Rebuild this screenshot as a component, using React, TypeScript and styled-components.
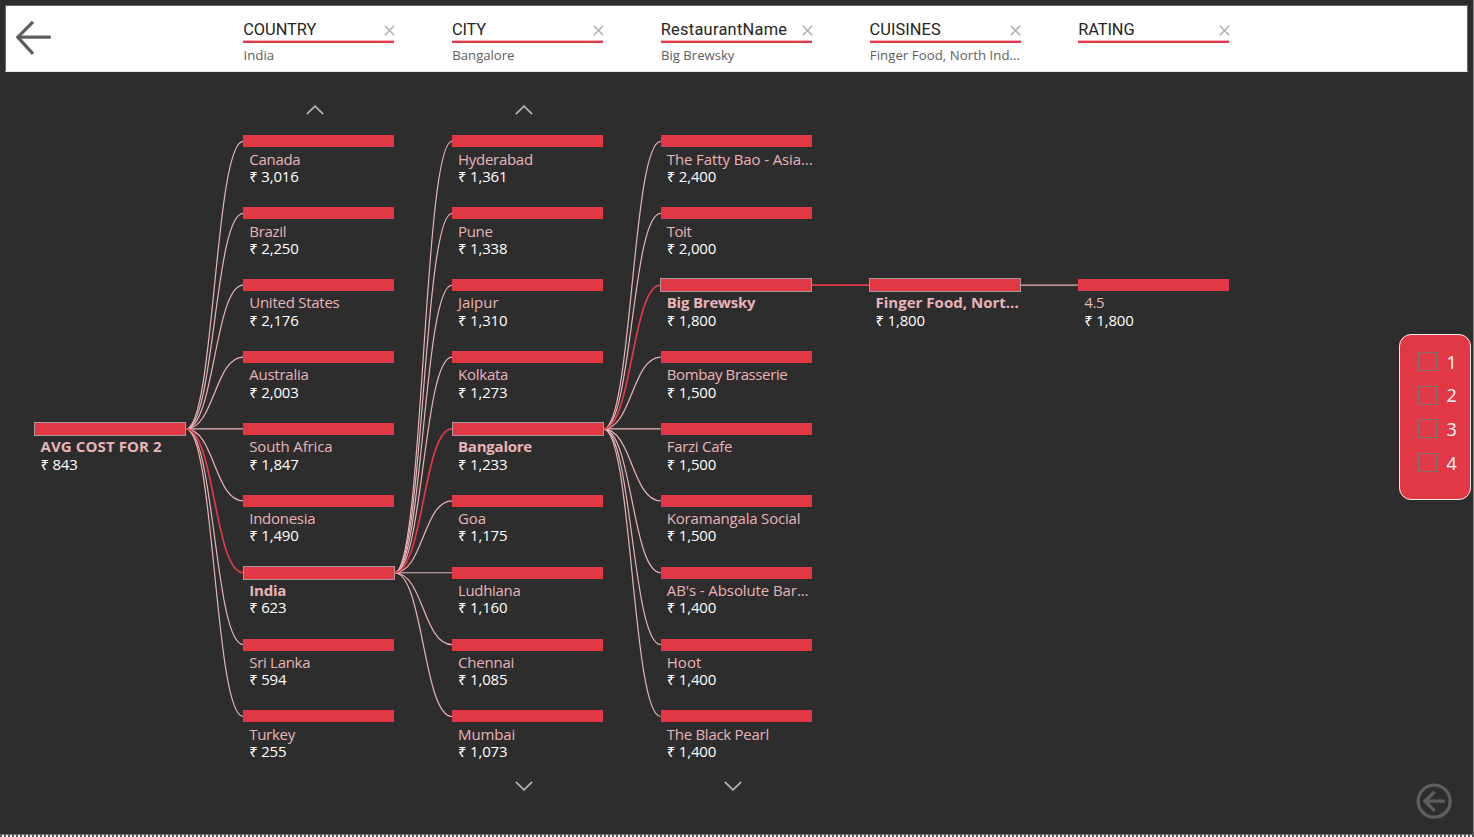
import React, { useLayoutEffect, useRef, useState } from "react";
import styled, { createGlobalStyle, css } from "styled-components";

const RED = "#e23845";
const PINK = "#e9b4b7";
const MUTED = "#b3b0ad";

const GlobalStyle = createGlobalStyle`
  * { box-sizing: border-box; }
  html, body { margin: 0; padding: 0; background: #2d2d2d; }
  body { overflow: hidden; }
`;

const Page = styled.main`
  position: relative;
  width: 1474px;
  height: 837px;
  display: flex;
  flex-direction: column;
  background: #2d2d2d;
  border-right: 1px solid #8a8a8a;
  font-family: "Open Sans", "Noto Sans", sans-serif;
`;

const Header = styled.header`
  flex: none;
  display: flex;
  align-items: flex-start;
  width: 1463px;
  height: 67px;
  margin: 5px 0 0 5px;
  background: #fff;
  border: 1px solid #666;
  border-bottom-color: #e6e6e6;
`;

const BackButton = styled.button`
  flex: none;
  width: 237.25px;
  height: 65px;
  padding: 0;
  border: 0;
  background: none;
  text-align: left;
  svg { display: block; }
`;

const Levels = styled.div`
  display: flex;
  gap: 57.75px;
`;

const Level = styled.section`
  width: 151px;
  padding-top: 12px;
`;

const LevelTitle = styled.div`
  display: flex;
  align-items: center;
  justify-content: space-between;
  height: 25px;
  border-bottom: 2px solid ${RED};
  box-shadow: inset 0 -1px #f3b5b9;
  color: #252423;
  font-family: Roboto, sans-serif;
  font-size: 16.4px;
  line-height: 22px;
  svg { display: block; margin: 1px -0.8px 0 0; }
`;

const LevelValue = styled.div`
  margin-top: 2px;
  padding-left: 0.3px;
  color: #605e5c;
  font-size: 13.2px;
  line-height: 20px;
`;

const Tree = styled.section`
  position: relative;
  display: grid;
  width: 1250px;
  margin-top: 25px;
  padding-left: 34.5px;
  grid-template-columns: repeat(6, 151px);
  grid-template-rows: 38.4px repeat(9, 71.89px) 38px;
  column-gap: 57.75px;
`;

const Connectors = styled.svg`
  position: absolute;
  left: 0;
  top: -97px;
  pointer-events: none;
`;

const Node = styled.div<{ $col: number; $row: number }>`
  position: relative;
  grid-column: ${(p) => p.$col + 1};
  grid-row: ${(p) => p.$row + 2};
`;

const Bar = styled.div<{ $selected?: boolean }>`
  height: 12px;
  background: ${RED};
  ${(p) =>
    p.$selected &&
    css`
      width: 152px;
      height: 14px;
      margin: -1px 0 -1px -0.4px;
      border: 1px solid #a39a9a;
    `}
`;

const NodeLabel = styled.div<{ $selected?: boolean }>`
  padding: 2.33px 0 0 6px;
  color: ${PINK};
  font-size: 15px;
  font-weight: ${(p) => (p.$selected ? 700 : 400)};
  line-height: 18px;
`;

const NodeValue = styled.div`
  padding-left: 6px;
  color: #fff;
  font-size: 15px;
  line-height: 18px;
  margin-top: -0.63px;
`;

const Pager = styled.div<{ $col: number; $down?: boolean }>`
  grid-column: ${(p) => p.$col + 1};
  grid-row: ${(p) => (p.$down ? 11 : 1)};
  display: flex;
  justify-content: center;
  align-items: flex-start;
  padding: ${(p) => (p.$down ? "0 7px 0 0" : "6.6px 6.6px 0 0")};
  svg { display: block; margin-top: ${(p) => (p.$down ? "-2.3px" : "0")}; }
`;

const RatingFilter = styled.aside`
  position: absolute;
  left: 1399px;
  top: 334px;
  width: 72px;
  height: 166px;
  padding: 17px 0 0 18.5px;
  border: 1.4px solid #f7e9ea;
  border-radius: 12px;
  background: ${RED};
`;

const Option = styled.label`
  display: flex;
  align-items: center;
  height: 33.6px;
  gap: 9.3px;
  color: #fff;
  font-size: 18px;
  line-height: 20px;
  &:first-child { margin-top: -7px; }
`;

const Box = styled.span`
  width: 19px;
  height: 19px;
  margin-left: -0.3px;
  border: 1px solid #80706f;
`;

const ReturnButton = styled.button`
  position: absolute;
  left: 1416px;
  top: 783px;
  padding: 0;
  border: 0;
  background: none;
  svg { display: block; }
`;

const Selection = styled.div`
  position: absolute;
  left: 0;
  bottom: 0;
  width: 1474px;
  height: 3px;
  border-top: 1px solid #666;
  background: repeating-linear-gradient(90deg, #555 0 2px, #fff 2px 4px);
`;

const Run = styled.span`
  display: inline-block;
  white-space: pre;
`;

/** Text tracked so that its advance equals the given width. */
function FitText({ text, width }: { text: string; width: number }) {
  const ref = useRef<HTMLSpanElement>(null);
  const [tracking, setTracking] = useState(0);
  useLayoutEffect(() => {
    if (ref.current) {
      const natural = ref.current.getBoundingClientRect().width;
      setTracking((width - natural) / text.length);
    }
  }, []);
  return (
    <Run ref={ref} style={{ letterSpacing: `${tracking}px` }}>
      {text}
    </Run>
  );
}

type Item = [label: string, width: number, value: string];

const columns: { start: number; selected: number; items: Item[] }[] = [
  { start: 4, selected: 4, items: [["AVG COST FOR 2", 121.3, "843"]] },
  {
    start: 0,
    selected: 6,
    items: [
      ["Canada", 51.2, "3,016"],
      ["Brazil", 37, "2,250"],
      ["United States", 90.2, "2,176"],
      ["Australia", 59.4, "2,003"],
      ["South Africa", 83.2, "1,847"],
      ["Indonesia", 66, "1,490"],
      ["India", 37, "623"],
      ["Sri Lanka", 61, "594"],
      ["Turkey", 45.6, "255"],
    ],
  },
  {
    start: 0,
    selected: 4,
    items: [
      ["Hyderabad", 74.8, "1,361"],
      ["Pune", 34.6, "1,338"],
      ["Jaipur", 40.6, "1,310"],
      ["Kolkata", 50.2, "1,273"],
      ["Bangalore", 74, "1,233"],
      ["Goa", 28, "1,175"],
      ["Ludhiana", 62.4, "1,160"],
      ["Chennai", 56.2, "1,085"],
      ["Mumbai", 57.2, "1,073"],
    ],
  },
  {
    start: 0,
    selected: 2,
    items: [
      ["The Fatty Bao - Asia...", 145.8, "2,400"],
      ["Toit", 24.6, "2,000"],
      ["Big Brewsky", 88.6, "1,800"],
      ["Bombay Brasserie", 120.6, "1,500"],
      ["Farzi Cafe", 65.4, "1,500"],
      ["Koramangala Social", 133.6, "1,500"],
      ["AB's - Absolute Bar...", 141.7, "1,400"],
      ["Hoot", 34.6, "1,400"],
      ["The Black Pearl", 102.2, "1,400"],
    ],
  },
  { start: 2, selected: 2, items: [["Finger Food, Nort...", 143.2, "1,800"]] },
  { start: 2, selected: -1, items: [["4.5", 20, "1,800"]] },
];

const levels = [
  { title: "COUNTRY", width: 73, value: "India", valueWidth: 30.6 },
  { title: "CITY", width: 34, value: "Bangalore", valueWidth: 62.2 },
  { title: "RestaurantName", width: 126.5, value: "Big Brewsky", valueWidth: 73.4 },
  { title: "CUISINES", width: 71.2, value: "Finger Food, North Ind...", valueWidth: 150.3 },
  { title: "RATING", width: 56.3, value: "", valueWidth: 0 },
];

const colX = (c: number) => 34.5 + c * 208.75;
const rowY = (r: number) => 141.4 + r * 71.89;

function TreeConnectors() {
  const lines: { d: string; on: boolean }[] = [];
  for (let c = 0; c < columns.length - 1; c++) {
    const next = columns[c + 1];
    const x1 = colX(c) + 151.3;
    const x2 = colX(c + 1);
    const y1 = rowY(columns[c].selected);
    const mid = (x1 + x2) / 2;
    next.items.forEach((_, i) => {
      const row = next.start + i;
      const y2 = rowY(row);
      lines.push({ d: `M${x1},${y1}C${mid},${y1} ${mid},${y2} ${x2},${y2}`, on: row === next.selected });
    });
  }
  lines.sort((a, b) => Number(a.on) - Number(b.on));
  return (
    <Connectors width="1250" height="837" viewBox="0 0 1250 837" fill="none">
      {lines.map((l) => (
        <path key={l.d} d={l.d} stroke={l.on ? RED : PINK} strokeWidth={l.on ? 1.7 : 1.2} />
      ))}
    </Connectors>
  );
}

const Chevron = ({ down }: { down?: boolean }) => (
  <svg width="20" height="12" viewBox="0 0 20 12" fill="none" stroke={MUTED} strokeWidth="1.8">
    <path d={down ? "M1.8 1.8 10 9.8 18.2 1.8" : "M1.8 10.2 10 2.2 18.2 10.2"} />
  </svg>
);

export default function App() {
  return (
    <Page>
      <GlobalStyle />
      <Header>
        <BackButton aria-label="Back">
          <svg width="60" height="65" viewBox="6 6 60 65" fill="none" stroke="#605e5c" strokeWidth="3.2">
            <path d="M33 21.8 17.8 37.2 33 53.8" />
            <path d="M17 37.1H50.8" />
          </svg>
        </BackButton>
        <Levels>
          {levels.map((l) => (
            <Level key={l.title}>
              <LevelTitle>
                <FitText text={l.title} width={l.width} />
                <svg width="11" height="11" viewBox="0 0 11 11" stroke={MUTED} strokeWidth="1.6">
                  <path d="M.8 .8 10.2 10.2M10.2 .8 .8 10.2" />
                </svg>
              </LevelTitle>
              <LevelValue>{l.value && <FitText text={l.value} width={l.valueWidth} />}</LevelValue>
            </Level>
          ))}
        </Levels>
      </Header>

      <Tree>
        <TreeConnectors />
        <Pager $col={1}><Chevron /></Pager>
        <Pager $col={2}><Chevron /></Pager>
        {columns.map((column, c) =>
          column.items.map(([label, width, value], i) => {
            const row = column.start + i;
            const selected = row === column.selected;
            return (
              <Node key={`${c}-${row}`} $col={c} $row={row}>
                <Bar $selected={selected} />
                <NodeLabel $selected={selected}>
                  <FitText text={label} width={width} />
                </NodeLabel>
                <NodeValue>
                  <FitText text={`₹ ${value}`} width={value.length > 3 ? 49.4 : 37} />
                </NodeValue>
              </Node>
            );
          })
        )}
        <Pager $col={2} $down><Chevron down /></Pager>
        <Pager $col={3} $down><Chevron down /></Pager>
      </Tree>

      <RatingFilter>
        {[1, 2, 3, 4].map((n) => (
          <Option key={n}>
            <Box />
            {n}
          </Option>
        ))}
      </RatingFilter>

      <ReturnButton aria-label="Return">
        <svg width="36" height="36" viewBox="0 0 36 36" fill="none" stroke="#605e5c" strokeWidth="3.3">
          <circle cx="18.2" cy="18.2" r="16" />
          <path d="M18.7 8.8 9 18.2 18.7 27.8M8.5 18.2H29" />
        </svg>
      </ReturnButton>
      <Selection />
    </Page>
  );
}
